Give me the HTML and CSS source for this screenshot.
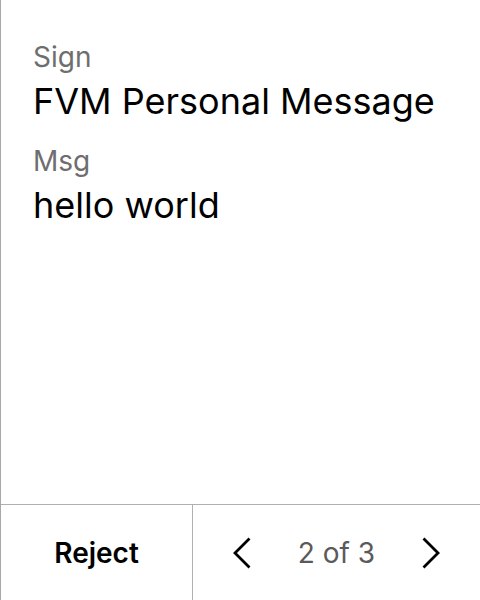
FILE: index.html
```html
<!DOCTYPE html>
<html>
<head>
<meta charset="utf-8">
<link rel="stylesheet" href="styles.css">
</head>
<body>
<div class="screen">
  <div class="content">
    <div class="field">
      <div class="label">Sign</div>
      <div class="value">FVM Personal Message</div>
    </div>
    <div class="field">
      <div class="label">Msg</div>
      <div class="value">hello world</div>
    </div>
  </div>
  <div class="footer">
    <div class="reject">Reject</div>
    <div class="nav">
      <svg class="chev" width="20" height="32" viewBox="0 0 20 32"><path d="M17.5 1.5 L3 16 L17.5 30.5" fill="none" stroke="#000" stroke-width="2.8"/></svg>
      <span class="page">2 of 3</span>
      <svg class="chev" width="20" height="32" viewBox="0 0 20 32"><path d="M2.5 1.5 L17 16 L2.5 30.5" fill="none" stroke="#000" stroke-width="2.8"/></svg>
    </div>
  </div>
</div>
</body>
</html>
```
FILE: styles.css
```css
html, body {
  margin: 0;
  padding: 0;
  background: #fff;
}
body {
  font-family: Inter, "Noto Sans", sans-serif;
  color: #000;
}
.screen {
  width: 480px;
  height: 600px;
  box-sizing: border-box;
  border-left: 1px solid #a8a8a8;
  display: flex;
  flex-direction: column;
}
.content {
  flex: 1;
  padding: 39px 32px 0 32px;
  display: flex;
  flex-direction: column;
  gap: 20px;
}
.field {
  display: flex;
  flex-direction: column;
  gap: 4px;
}
.label {
  font-size: 28px;
  line-height: 36px;
  color: #6e6e6e;
}
.value {
  font-size: 36px;
  line-height: 44px;
  color: #000;
}
.footer {
  height: 96px;
  box-sizing: border-box;
  border-top: 1px solid #b0b0b0;
  display: flex;
}
.reject {
  width: 191px;
  border-right: 1px solid #b0b0b0;
  display: flex;
  align-items: center;
  justify-content: center;
  font-size: 28px;
  font-weight: 600;
}
.nav {
  flex: 1;
  display: flex;
  align-items: center;
  justify-content: center;
  gap: 46px;
}
.page {
  font-size: 28px;
  color: #5a5a5a;
}
.chev {
  display: block;
}
```
